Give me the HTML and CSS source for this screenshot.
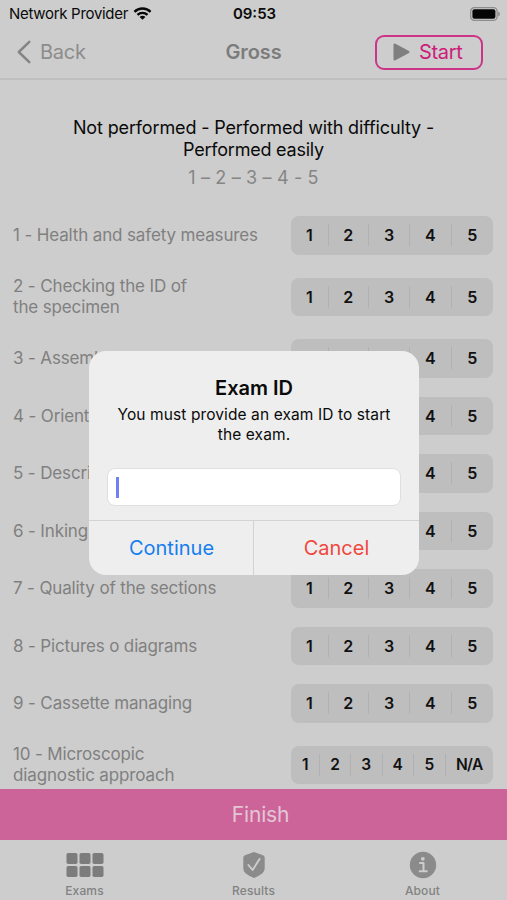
FILE: index.html
```html
<!DOCTYPE html>
<html lang="en">
<head>
<meta charset="utf-8">
<title>Gross</title>
<link rel="stylesheet" href="styles.css">
</head>
<body>
<div class="app">
  <header>
    <div class="status">
      <span class="carrier">Network Provider</span>
      <svg class="wifi" width="20" height="15" viewBox="0 0 20 15"><g fill="none" stroke="#080808" stroke-width="2.5"><path d="M1.5 5.8a12 12 0 0 1 17 0"/><path d="M4.7 9a7.5 7.5 0 0 1 10.6 0"/></g><path d="M10 14.2l-3-3a4.2 4.2 0 0 1 6 0z" fill="#080808"/></svg>
      <time>09:53</time>
      <svg class="battery" width="30" height="14" viewBox="0 0 30 14"><rect x=".7" y=".7" width="26.4" height="12.6" rx="3.6" fill="none" stroke="#8d8d8d" stroke-width="1.3"/><rect x="2.4" y="2.3" width="23" height="9.4" rx="2" fill="#050505"/><path d="M28.2 4.6q1.8 .7 1.8 2.4t-1.8 2.4z" fill="#8d8d8d"/></svg>
    </div>
    <div class="nav">
      <div class="back"><svg width="16" height="26" viewBox="0 0 16 26"><path d="M13.3 2.8L2.8 13l10.500 10.200" fill="none" stroke="#858585" stroke-width="2.5" stroke-linecap="round" stroke-linejoin="round"/></svg><span>Back</span></div>
      <h1>Gross</h1>
      <button class="start"><svg width="17" height="18" viewBox="0 0 17 18"><path d="M1.500 1.500v15L15.500 9z" fill="#7f7f7f" stroke="#7f7f7f" stroke-width="2" stroke-linejoin="round"/></svg><span>Start</span></button>
    </div>
  </header>
  <main>
    <p class="legend"><span class="l1">Not performed - Performed with difficulty -</span><br><span class="l2">Performed easily</span></p>
    <p class="scale">1 – 2 – 3 – 4 - 5</p>
    <div class="rows">
      <div class="row"><label>1 - Health and safety measures</label><div class="seg"><b>1</b><b>2</b><b>3</b><b>4</b><b>5</b></div></div>
      <div class="row tall"><label>2 - Checking the ID of<br>the specimen</label><div class="seg"><b>1</b><b>2</b><b>3</b><b>4</b><b>5</b></div></div>
      <div class="row"><label>3 - Assembly</label><div class="seg"><b>1</b><b>2</b><b>3</b><b>4</b><b>5</b></div></div>
      <div class="row"><label>4 - Orientation</label><div class="seg"><b>1</b><b>2</b><b>3</b><b>4</b><b>5</b></div></div>
      <div class="row"><label>5 - Description</label><div class="seg"><b>1</b><b>2</b><b>3</b><b>4</b><b>5</b></div></div>
      <div class="row"><label>6 - Inking</label><div class="seg"><b>1</b><b>2</b><b>3</b><b>4</b><b>5</b></div></div>
      <div class="row"><label>7 - Quality of the sections</label><div class="seg"><b>1</b><b>2</b><b>3</b><b>4</b><b>5</b></div></div>
      <div class="row"><label>8 - Pictures o diagrams</label><div class="seg"><b>1</b><b>2</b><b>3</b><b>4</b><b>5</b></div></div>
      <div class="row"><label>9 - Cassette managing</label><div class="seg"><b>1</b><b>2</b><b>3</b><b>4</b><b>5</b></div></div>
      <div class="row tall"><label>10 - Microscopic<br>diagnostic approach</label><div class="seg six"><b>1</b><b>2</b><b>3</b><b>4</b><b>5</b><b>N/A</b></div></div>
    </div>
  </main>
  <button class="finish">Finish</button>
  <nav class="tabs">
    <div class="tab"><svg width="38" height="26" viewBox="0 0 38 26" fill="#7c7c7c"><rect x="0.500" y="1" width="11" height="11" rx="1.800"/><rect x="13.500" y="1" width="11" height="11" rx="1.800"/><rect x="26.500" y="1" width="11" height="11" rx="1.800"/><rect x="0.500" y="14" width="11" height="11" rx="1.800"/><rect x="13.500" y="14" width="11" height="11" rx="1.800"/><rect x="26.500" y="14" width="11" height="11" rx="1.800"/></svg><span>Exams</span></div>
    <div class="tab"><svg width="24" height="28" viewBox="0 0 24 28"><path d="M12 1l9 3.200q1.700.6 1.700 2.400v10.800q0 3.200-2.500 5Q16 25.500 12 27q-4-1.500-8.200-4.600Q1.300 20.600 1.300 17.400V6.600q0-1.800 1.700-2.400z" fill="#8b8b8b"/><path d="M6.400 14l4.200 5 7-11" fill="none" stroke="#cdcdcd" stroke-width="1.900" stroke-linecap="round" stroke-linejoin="round"/></svg><span>Results</span></div>
    <div class="tab"><svg width="28" height="28" viewBox="0 0 28 28"><circle cx="14" cy="14" r="13.200" fill="#8b8b8b"/><circle cx="13.800" cy="7.800" r="1.900" fill="#cdcdcd"/><path d="M11 12h3.500v8.300M10.700 20.300h7.100" fill="none" stroke="#cdcdcd" stroke-width="2" stroke-linecap="round" stroke-linejoin="round"/></svg><span>About</span></div>
  </nav>
  <div class="alert" role="dialog">
    <div class="body">
      <h2>Exam ID</h2>
      <p>You must provide an exam ID to start<br>the exam.</p>
      <div class="field"><i></i></div>
    </div>
    <div class="actions"><button class="continue">Continue</button><button class="cancel">Cancel</button></div>
  </div>
</div>
</body>
</html>
```
FILE: styles.css
```css
* { box-sizing: border-box; margin: 0; padding: 0; }
body { font-family: Inter, "Liberation Sans", sans-serif; background: #cdcdcd; color: #0a0a0a; }
button { font: inherit; border: 0; background: none; color: inherit; }
svg { display: block; flex: none; }
.app { position: relative; width: 507px; height: 900px; display: flex; flex-direction: column; overflow: hidden; white-space: nowrap; }
header { height: 80px; flex: none; border-bottom: 2px solid #bfbfbf; }
.status { height: 27px; display: grid; grid-template-columns: 124px 1fr auto 1fr 124px; align-items: center; padding: 0 7px 0 9px; }
.carrier { font-size: 15px; letter-spacing: -0.3px; }
.wifi { width: 19px; }
time { font-size: 15px; font-weight: 600; }
.battery { grid-column: 5; justify-self: end; }
.nav { height: 50px; display: grid; grid-template-columns: 1fr auto 1fr; align-items: center; padding: 0 24px; }
.back { margin-left: -8px; display: flex; align-items: center; gap: 8px; color: #8c8c8c; font-size: 20px; letter-spacing: -0.25px; }
h1 { font-size: 20px; font-weight: 600; color: #7c7c7c; letter-spacing: -0.1px; }
.start { justify-self: end; width: 108px; height: 35px; border: 2px solid #cc3487; border-radius: 9px; display: flex; align-items: center; padding-left: 16px; gap: 9px; color: #cc1b7b; font-size: 20px; letter-spacing: -0.3px; }
main { flex: none; height: 709px; padding-top: 37px; }
.legend { text-align: center; font-size: 18px; line-height: 21.500px; letter-spacing: -0.14px; }
.l2 { letter-spacing: -0.22px; }
.scale { text-align: center; font-size: 18px; line-height: 22px; color: #858585; margin-top: 7px; letter-spacing: 0.15px; }
.rows { margin-top: 27px; padding: 0 14px 0 13px; display: flex; flex-direction: column; gap: 19px; }
.row { height: 38.500px; display: flex; align-items: center; justify-content: space-between; color: #808080; font-size: 17px; line-height: 20.500px; letter-spacing: -0.14px; }
.tall { height: 46.500px; }
.seg { width: 202.500px; height: 38.500px; flex: none; border-radius: 8px; background: #bebebf; display: grid; grid-template-columns: 37px 40.500px 41px 41.500px 42.500px; align-items: center; color: #111; font-size: 16px; letter-spacing: 0; }
.six { grid-template-columns: 28.500px 31px 31.500px 31.500px 31.500px 48.500px; font-size: 15.500px; }
.seg b { font-weight: 600; height: 22px; line-height: 22px; text-align: center; border-left: 1px solid #b1b1b3; }
.seg b:first-child { border-color: transparent; }
.six b:last-child { letter-spacing: -0.6px; }
.finish { height: 51px; flex: none; background: #cc6499; color: #e3c6d5; font-size: 21px; letter-spacing: -0.15px; padding-left: 14px; }
.tabs { height: 60px; display: grid; grid-template-columns: repeat(3, 1fr); }
.tab { display: flex; flex-direction: column; align-items: center; padding-top: 11px; font-size: 12px; font-weight: 500; color: #828282; letter-spacing: 0.15px; }
.tab svg { height: 28px; }
.tab span { line-height: 15px; margin-top: 4px; }
.alert { position: absolute; left: 89px; top: 351px; width: 330px; height: 224px; border-radius: 17px; background: #eee; overflow: hidden; }
.body { height: 169px; padding: 25px 18px 0; text-align: center; }
h2 { font-size: 20px; line-height: 25px; font-weight: 600; }
.body p { font-size: 15.500px; line-height: 19.500px; margin-top: 4px; letter-spacing: 0.1px; }
.field { height: 38px; margin-top: 24px; background: #fff; border: 1px solid #dfdfdf; border-radius: 8px; padding: 8px; }
.field i { display: block; width: 2.500px; height: 21px; background: #7181f2; }
.actions { height: 55px; display: grid; grid-template-columns: 1fr 1fr; border-top: 1px solid #d3d3d3; font-size: 20px; letter-spacing: -0.2px; }
.continue { color: #167eef; border-right: 1px solid #d3d3d3; padding-left: 1px; }
.cancel { color: #f0473f; }
```
